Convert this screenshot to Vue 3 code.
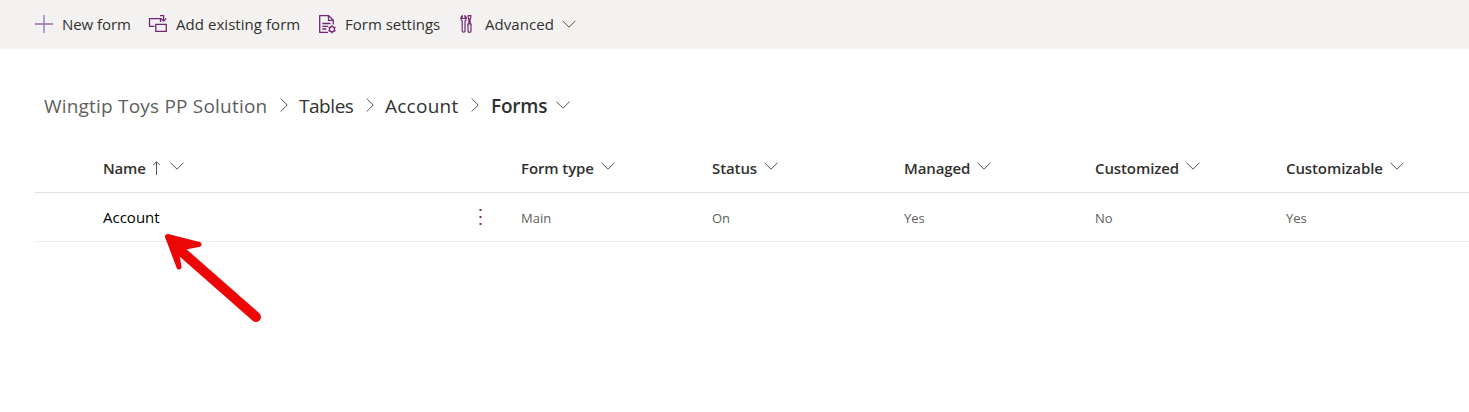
<script setup>
const columns = [
  { key: 'type', label: 'Form type', value: 'Main' },
  { key: 'status', label: 'Status', value: 'On' },
  { key: 'managed', label: 'Managed', value: 'Yes' },
  { key: 'customized', label: 'Customized', value: 'No' },
  { key: 'customizable', label: 'Customizable', value: 'Yes' }
]
const crumbs = [
  { key: 'solution', label: 'Wingtip Toys PP Solution' },
  { key: 'tables', label: 'Tables' },
  { key: 'account', label: 'Account' }
]
</script>

<template>
  <div class="page">
    <header class="commands">
      <svg class="icon plus" width="20" height="20" viewBox="0 0 20 20"><path d="M1 10H19" /><path class="stem" d="M10 1V19" /></svg>
      <span class="cmd new">New form</span>
      <svg class="icon" width="20" height="20" viewBox="0 0 20 20">
        <path d="M6.5 12.4H1.5V4.6H12.5V8" /><path d="M12 1.6H15.6V6.8M12.9 4.4L15.6 7.1L18.3 4.4" /><path d="M7.8 10.4H18.3V17.4H7.8Z" />
      </svg>
      <span class="cmd add">Add existing form</span>
      <svg class="icon" width="18" height="20" viewBox="0 0 18 20">
        <path d="M10 18.3H1.7V1.6H10.7L15.3 6.2V10.5M10.5 1.8V6.4H15.2M4.3 9.5H12.5M4.3 12.3H10M4.3 15H8.3" />
        <circle cx="14" cy="15.2" r="2.5" />
        <path class="teeth" d="M14 11.2V12.7M14 17.7V19.2M10.5 13.2L11.8 13.9M16.2 16.5L17.5 17.2M10.5 17.2L11.8 16.5M16.2 13.9L17.5 13.2" />
      </svg>
      <span class="cmd settings">Form settings</span>
      <svg class="icon tools" width="14" height="20" viewBox="0 0 14 20">
        <path d="M2.2 1.8C.4 3 .6 5.8 2.2 7V16.8C2.2 18.7 5 18.7 5 16.8V7C6.6 5.8 6.8 3 5 1.8V4.5H2.2Z" />
        <path d="M8.2 1.6H10.8V4L10.1 5V9.8H8.9V5L8.2 4ZM7.2 10H11.8M8 10V17C8 18.7 11 18.7 11 17V10" />
      </svg>
      <span class="cmd advanced">Advanced</span>
      <svg class="chevron" width="14" height="8" viewBox="0 0 14 8"><path d="M.5 .7L7 7.2L13.5 .7" /></svg>
    </header>

    <nav class="crumbs">
      <template v-for="c in crumbs" :key="c.key">
        <span class="crumb" :class="c.key">{{ c.label }}</span>
        <svg class="chevron sep" width="8" height="14" viewBox="0 0 8 14"><path d="M.7 .5L7.2 7L.7 13.5" /></svg>
      </template>
      <span class="crumb current">Forms</span>
      <svg class="chevron end" width="14" height="8" viewBox="0 0 14 8"><path d="M.5 .7L7 7.2L13.5 .7" /></svg>
    </nav>

    <main class="grid">
      <div class="row head">
        <div class="cell name">
          <span class="label name-label">Name</span>
          <svg class="chevron sort" width="8" height="14" viewBox="0 0 8 14"><path d="M4.5 14V1M1.1 4.2L4.5 .8L7.9 4.2" /></svg>
          <svg class="chevron" width="14" height="8" viewBox="0 0 14 8"><path d="M.5 .7L7 7.2L13.5 .7" /></svg>
        </div>
        <div v-for="c in columns" :key="c.key" class="cell">
          <span class="label" :class="c.key">{{ c.label }}</span>
          <svg class="chevron" width="14" height="8" viewBox="0 0 14 8"><path d="M.5 .7L7 7.2L13.5 .7" /></svg>
        </div>
      </div>
      <div class="row body">
        <div class="cell name">
          <span class="record">Account</span>
          <svg class="more" width="4" height="18" viewBox="0 0 4 18"><path d="M1.5 1h2v2h-2zM1.5 8h2v2h-2zM1.5 15h2v2h-2z" /></svg>
        </div>
        <div v-for="c in columns" :key="c.key" class="cell value">{{ c.value }}</div>
      </div>
    </main>

    <svg class="arrow" width="106" height="98" viewBox="0 0 106 98">
      <path class="shaft" d="M22 23L96 88" />
      <path class="tip" d="M7.5 7.5L39 15.5L25 18L17 26L19 38Z" />
    </svg>
  </div>
</template>

<style>
body { margin: 0; background: #fff; }
</style>

<style scoped>
.page { position: relative; width: 1469px; height: 412px; overflow: hidden; background: #fff; color: #323130; font-family: "Open Sans", "Noto Sans", sans-serif; }
svg { flex: none; display: block; fill: none; }
span { flex: none; white-space: nowrap; }
.commands { display: flex; align-items: center; box-sizing: border-box; height: 49px; padding: 0 0 1px 34px; background: #f3f2f1; font-size: 15px; }
.icon { stroke: #742774; stroke-width: 1.3; }
.plus { stroke: #8b5a8d; }
.plus .stem { stroke: #8878c0; }
.teeth { stroke-width: 1.5; }
.tools { stroke-width: 1.2; }
.new { width: 78px; margin: 0 8px; letter-spacing: -.05px; }
.add { width: 135px; margin: 0 7px 0 8px; letter-spacing: .05px; }
.settings { width: 105px; margin: 0 10px 0 9px; }
.advanced { width: 77px; margin-left: 11px; letter-spacing: .05px; }
.chevron { stroke: #54514f; stroke-width: 1; }
.crumbs { display: flex; align-items: center; height: 28px; margin-top: 43px; padding-left: 44px; font-size: 19px; }
.solution { width: 236px; color: #605e5c; letter-spacing: .2px; }
.sep { margin-right: 11px; margin-top: -2px; }
.tables { width: 67px; letter-spacing: -.45px; }
.account { width: 86px; letter-spacing: .25px; }
.current { width: 65px; margin-left: 1px; font-weight: 600; letter-spacing: -.2px; }
.end { margin-top: -2px; }
.grid { margin: 23px 0 0 35px; }
.row { display: grid; grid-template-columns: 486px 191px 192px 191px 191px 1fr; box-sizing: border-box; height: 49px; align-items: center; }
.head { height: 50px; border-bottom: 1px solid #e1dfdd; font-weight: 600; font-size: 15px; letter-spacing: -.1px; }
.body { border-bottom: 1px solid #edebe9; }
.cell { display: flex; align-items: center; }
.name { padding-left: 68px; }
.name-label { width: 49px; letter-spacing: -.2px; }
.head .chevron { margin: -4px 0 0 7px; }
.head .sort { margin: 0 3px 0 0; }
.record { width: 375px; font-size: 15px; color: #000; }
.more { fill: #742774; }
.value { padding-top: 1px; font-size: 13px; color: #605e5c; }
.arrow { position: absolute; left: 160px; top: 229px; stroke: #ec0606; fill: #ec0606; stroke-linecap: round; stroke-linejoin: round; }
.shaft { stroke-width: 10; }
.tip { stroke-width: 5; }
</style>
